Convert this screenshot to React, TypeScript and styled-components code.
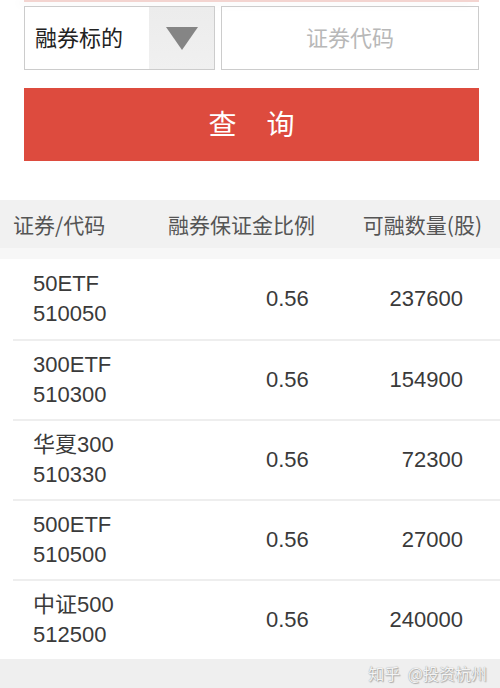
import styled, {createGlobalStyle} from "styled-components";

const GlobalStyle = createGlobalStyle`
    html, body {
        margin: 0;
        padding: 0;
        background: #ffffff;
        font-family: "Liberation Sans", "Noto Sans CJK SC", sans-serif;
    }
`;

const Page = styled.main`
    width: 500px;
    height: 688px;
    display: flex;
    flex-direction: column;
    overflow: hidden;
    background: #ffffff;
`;

const TopEdge = styled.div`
    height: 2px;
    margin: 0 21px 0 24px;
    background: #f3d4d0;
    box-shadow: -6px 2px 10px rgba(0, 0, 0, 0.08);
`;

const FormRow = styled.div`
    display: flex;
    gap: 6px;
    padding: 4px 21px 0 24px;
`;

const Select = styled.div`
    width: 189px;
    height: 62px;
    display: flex;
    border: 1px solid #cccccc;
    background: #ffffff;
`;

const SelectLabel = styled.span`
    flex: 1;
    display: flex;
    align-items: center;
    padding: 0 0 5px 10px;
    font-family: "Noto Sans CJK SC", sans-serif;
    font-size: 22px;
    color: #222222;
`;

const ArrowBox = styled.span`
    width: 65px;
    display: flex;
    align-items: center;
    justify-content: center;
    background: linear-gradient(#ececec, #f0f0f0);
`;

const Arrow = styled.span`
    width: 0;
    height: 0;
    border-left: 16px solid transparent;
    border-right: 16px solid transparent;
    border-top: 23px solid #858585;
    margin-top: 1px;
`;

const CodeInput = styled.div`
    flex: 1;
    height: 62px;
    display: flex;
    align-items: center;
    justify-content: center;
    padding-bottom: 5px;
    box-sizing: border-box;
    height: 64px;
    border: 1px solid #cccccc;
    font-family: "Noto Sans CJK SC", sans-serif;
    font-size: 22px;
    color: #b8b8b8;
`;

const QueryButton = styled.button`
    margin: 18px 21px 0 24px;
    height: 73px;
    border: none;
    background: #dd4b3e;
    color: #ffffff;
    font-family: "Noto Sans CJK SC", sans-serif;
    font-size: 28px;
    letter-spacing: 30px;
    padding: 0 0 4px 30px;
`;

const TableHead = styled.div`
    margin-top: 39px;
    height: 48px;
    display: grid;
    grid-template-columns: 155px 1fr auto;
    align-items: center;
    padding: 0 18px 0 13px;
    background: #f1f1f1;
    font-family: "Noto Sans CJK SC", sans-serif;
    font-size: 21px;
    color: #555555;
`;

const HeadGap = styled.div`
    height: 11px;
    background: #f7f7f7;
`;

const Row = styled.div<{ $first?: boolean }>`
    height: ${p => (p.$first ? "80px" : "78px")};
    margin-left: 13px;
    padding: 0 37px 0 20px;
    display: grid;
    grid-template-columns: 233px 1fr auto;
    align-items: center;
    border-top: ${p => (p.$first ? "none" : "2px solid #eeeeee")};
    font-size: 22px;
    color: #3a3a3a;
`;

const Name = styled.div`
    line-height: 30px;
`;

const Footer = styled.footer`
    flex: 1;
    display: flex;
    justify-content: flex-end;
    padding: 2px 13px 0 0;
    background: #efefef;
`;

const Watermark = styled.span`
    font-family: "Noto Sans CJK SC", sans-serif;
    font-size: 16px;
    word-spacing: 4px;
    color: #f4f4f4;
    text-shadow: 0 0 1px #8a8a8a, 1px 1px 1px #b0b0b0;
`;

const rows = [
    {name: "50ETF", code: "510050", ratio: "0.56", qty: "237600"},
    {name: "300ETF", code: "510300", ratio: "0.56", qty: "154900"},
    {name: "华夏300", code: "510330", ratio: "0.56", qty: "72300"},
    {name: "500ETF", code: "510500", ratio: "0.56", qty: "27000"},
    {name: "中证500", code: "512500", ratio: "0.56", qty: "240000"},
];

export default function App() {
    return (
        <Page>
            <GlobalStyle />
            <TopEdge />
            <FormRow>
                <Select>
                    <SelectLabel>融券标的</SelectLabel>
                    <ArrowBox><Arrow /></ArrowBox>
                </Select>
                <CodeInput>证券代码</CodeInput>
            </FormRow>
            <QueryButton>查询</QueryButton>
            <TableHead>
                <span>证券/代码</span>
                <span>融券保证金比例</span>
                <span>可融数量(股)</span>
            </TableHead>
            <HeadGap />
            {rows.map((r, i) => (
                <Row key={r.code} $first={i === 0}>
                    <Name>
                        {r.name}
                        <br />
                        {r.code}
                    </Name>
                    <span>{r.ratio}</span>
                    <span>{r.qty}</span>
                </Row>
            ))}
            <Footer>
                <Watermark>知乎 @投资杭州</Watermark>
            </Footer>
        </Page>
    );
}
